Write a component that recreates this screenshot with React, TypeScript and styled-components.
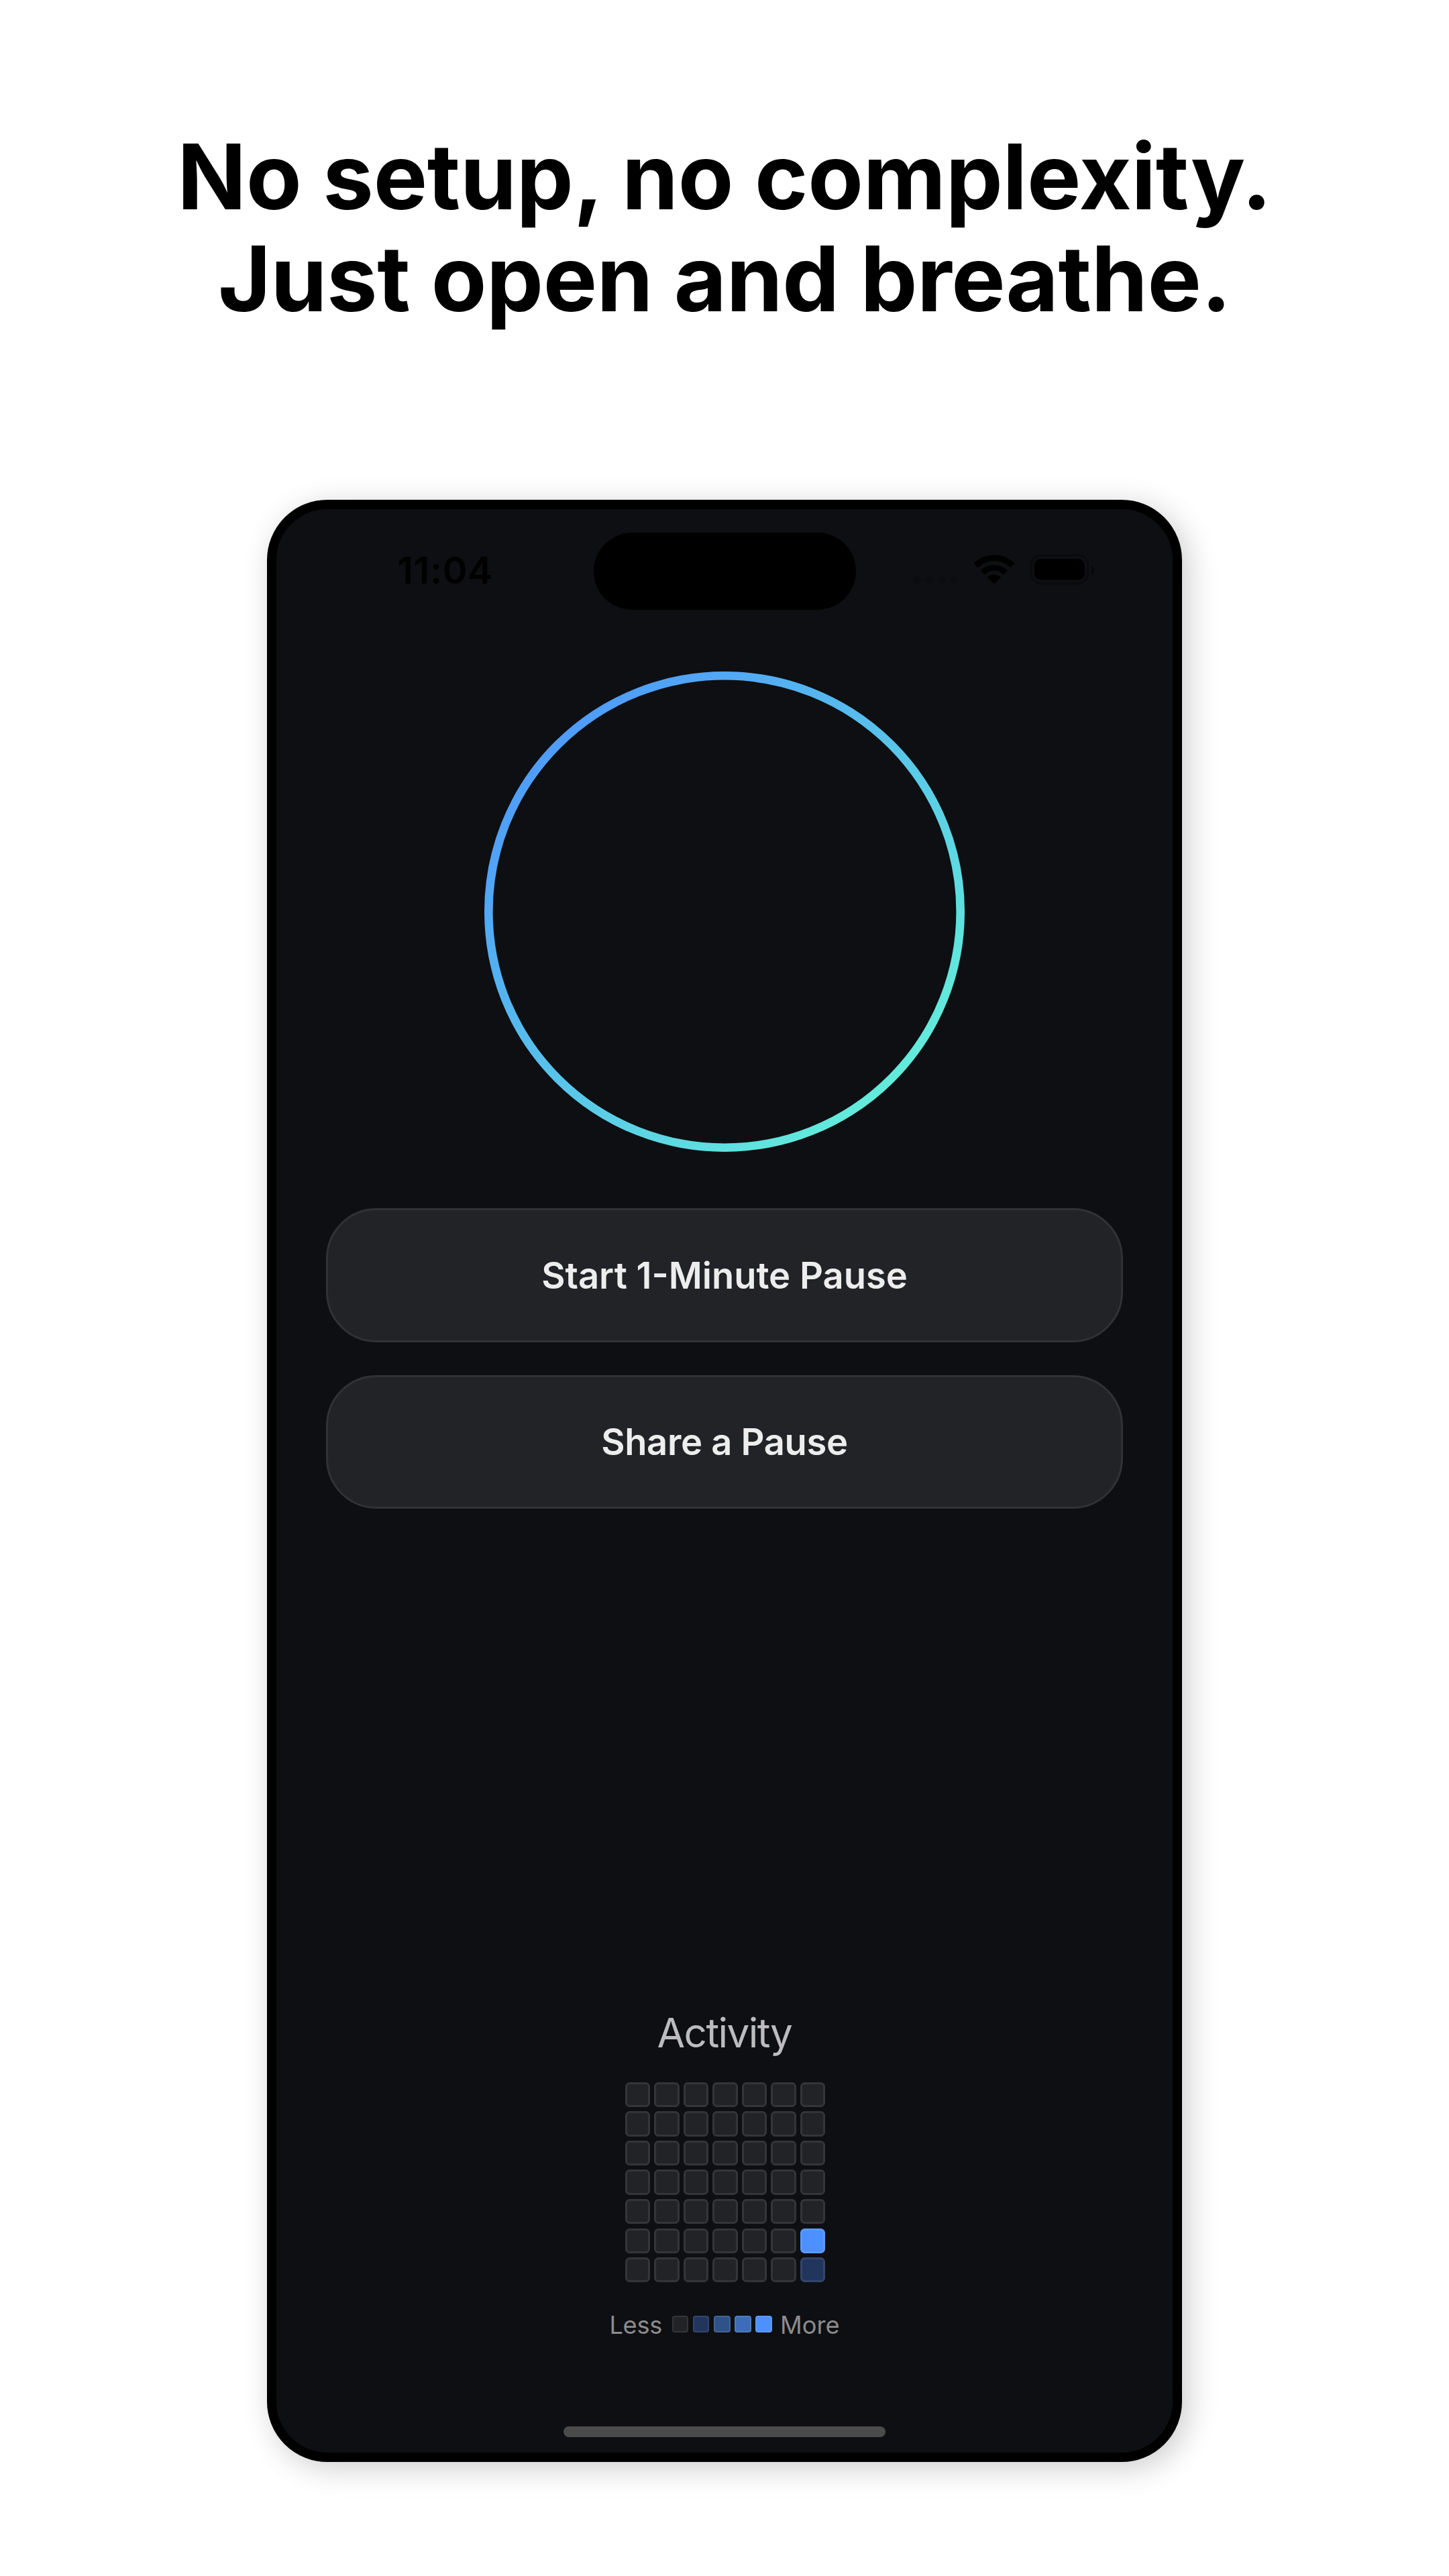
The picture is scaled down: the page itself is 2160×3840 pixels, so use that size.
import React from 'react';
import styled, { createGlobalStyle } from 'styled-components';

const GlobalStyle = createGlobalStyle`
  * {
    box-sizing: border-box;
  }
  body {
    margin: 0;
    background: #ffffff;
    font-family: Inter, 'Liberation Sans', sans-serif;
  }
`;

const Page = styled.main`
  display: flex;
  flex-direction: column;
  align-items: center;
  width: 2160px;
  height: 3840px;
  padding-top: 187px;
  overflow: hidden;
  background: #ffffff;
`;

const Headline = styled.h1`
  margin: 0;
  color: #000000;
  font-size: 135px;
  font-weight: 700;
  line-height: 152px;
  text-align: center;
  white-space: nowrap;
`;

const HeadlineRow = styled.span<{ $tracking: number }>`
  display: block;
  letter-spacing: ${({ $tracking }) => $tracking}px;
`;

const Phone = styled.section`
  width: 1364px;
  height: 2925px;
  margin-top: 254px;
  border: 14px solid #000000;
  border-radius: 90px;
  background: #0e0f12;
  box-shadow: 9px 9px 46px rgba(0, 0, 0, 0.2);
  display: flex;
  flex-direction: column;
  align-items: center;
`;

const StatusBar = styled.header`
  display: flex;
  width: 100%;
  height: 115px;
  margin-top: 35px;
`;

const StatusSide = styled.div<{ $inset: number; $lift: number }>`
  display: flex;
  width: 472.5px;
  align-items: center;
  padding: 0 0 ${({ $lift }) => $lift}px ${({ $inset }) => $inset}px;
`;

const Clock = styled.time`
  color: #000000;
  font-size: 55.5px;
  font-weight: 600;
  line-height: 68px;
  letter-spacing: 0.9px;
`;

const Island = styled.div`
  width: 391px;
  border-radius: 58px;
  background: #000000;
`;

const StatusIcon = styled.svg<{ $gap?: number }>`
  display: block;
  flex: none;
  height: 46px;
  margin-left: ${({ $gap = 0 }) => $gap}px;
  overflow: visible;
`;

const Ring = styled.svg`
  display: block;
  width: 716px;
  height: 716px;
  margin-top: 92px;
`;

const Actions = styled.div`
  display: flex;
  flex-direction: column;
  gap: 49px;
  width: 1188px;
  margin-top: 84px;
`;

const ActionButton = styled.button<{ $tracking?: number }>`
  display: flex;
  align-items: center;
  justify-content: center;
  height: 199.5px;
  padding: 0;
  border: 3px solid #313236;
  border-radius: 75px;
  background: #222327;
  color: #ededee;
  font-family: inherit;
  font-size: 54.3px;
  font-weight: 600;
  line-height: 66px;
  letter-spacing: ${({ $tracking = 0 }) => $tracking}px;
`;

const Activity = styled.section`
  display: flex;
  flex-direction: column;
  align-items: center;
  margin-top: auto;
`;

const ActivityTitle = styled.h2`
  margin: 0 0 36.6px;
  color: #bcbcbe;
  font-size: 60.3px;
  font-weight: 400;
  line-height: 73px;
  letter-spacing: -1.6px;
`;

const levels = [
  { fill: '#222327', edge: '#343537' },
  { fill: '#22355d', edge: '#33456a' },
  { fill: '#2f5389', edge: '#426295' },
  { fill: '#3d6db9', edge: '#4f7bc0' },
  { fill: '#4d90ff', edge: '#5c99ff' },
];

const HeatMap = styled.div`
  display: grid;
  grid-template-columns: repeat(7, 37.31px);
  grid-auto-rows: 37.31px;
  gap: 6.22px;
  margin-left: 2px;
`;

const HeatCell = styled.div<{ $level: number }>`
  border: 3px solid ${({ $level }) => levels[$level].edge};
  border-radius: 6.5px;
  background: ${({ $level }) => levels[$level].fill};
`;

const Legend = styled.div`
  display: flex;
  align-items: center;
  gap: 12.4px;
  margin-top: 41.7px;
  color: #8c8c8e;
  font-size: 36.2px;
  line-height: 44px;
`;

const LegendLess = styled.span`
  margin-right: 2px;
  letter-spacing: -0.25px;
`;

const LegendScale = styled.div`
  display: flex;
  gap: 6.22px;
  margin-bottom: 3px;
`;

const LegendCell = styled.div<{ $level: number }>`
  width: 24.87px;
  height: 24.87px;
  border: 2px solid ${({ $level }) => levels[$level].edge};
  border-radius: 4px;
  background: ${({ $level }) => levels[$level].fill};
`;

const HomeIndicator = styled.div`
  width: 480px;
  height: 16px;
  margin: 129px 0 23px;
  border-radius: 8px;
  background: #4b4b4b;
`;

const days = Array.from({ length: 49 }, (_, i) => (i === 41 ? 4 : i === 48 ? 1 : 0));

function SignalDots() {
  return (
    <StatusIcon width="68" viewBox="0 0 68 46" fill="#000000" fillOpacity="0.18">
      {[6.7, 25.3, 43.7, 62.3].map((cx) => (
        <circle key={cx} cx={cx} cy="38.3" r="6" />
      ))}
    </StatusIcon>
  );
}

function WifiIcon() {
  return (
    <StatusIcon
      $gap={24}
      width="60"
      viewBox="0 0 60 46"
      fill="#000000"
      stroke="#000000"
      strokeWidth="1.6"
      strokeLinejoin="round"
    >
      <path d="M0.6 13.7A42.6 42.6 0 0 1 59.4 13.7L54.3 19A35.2 35.2 0 0 0 5.7 19Z" />
      <path d="M11.2 24.6A27.4 27.4 0 0 1 48.8 24.6L44.2 29.4A20.7 20.7 0 0 0 15.8 29.4Z" />
      <path d="M21 34.8A13.2 13.2 0 0 1 39 34.8L30 43.5Z" />
    </StatusIcon>
  );
}

function BatteryIcon() {
  return (
    <StatusIcon $gap={23} width="97" viewBox="0 0 97 46">
      <rect
        x="2.2"
        y="1.5"
        width="84.6"
        height="42.3"
        rx="14.5"
        fill="none"
        stroke="#000000"
        strokeOpacity="0.32"
        strokeWidth="3"
      />
      <rect x="7" y="7.3" width="74.7" height="31" rx="9" fill="#000000" />
      <path
        d="M91.7 16C95.4 17.3 97 20.4 97 23.4C97 26.4 95.4 29.5 91.7 30.8Z"
        fill="#000000"
        fillOpacity="0.36"
      />
    </StatusIcon>
  );
}

export default function App() {
  return (
    <Page>
      <GlobalStyle />
      <Headline>
        <HeadlineRow $tracking={-0.25}>No setup, no complexity.</HeadlineRow>
        <HeadlineRow $tracking={-0.45}>Just open and breathe.</HeadlineRow>
      </Headline>
      <Phone>
        <StatusBar>
          <StatusSide $inset={180.5} $lift={3}>
            <Clock>11:04</Clock>
          </StatusSide>
          <Island />
          <StatusSide $inset={84} $lift={5}>
            <SignalDots />
            <WifiIcon />
            <BatteryIcon />
          </StatusSide>
        </StatusBar>
        <Ring viewBox="0 0 716 716">
          <defs>
            <linearGradient id="breath" x1="0" y1="0" x2="1" y2="1">
              <stop offset="0" stopColor="#4b8dff" />
              <stop offset="1" stopColor="#66fbd5" />
            </linearGradient>
          </defs>
          <circle cx="358" cy="358" r="351.7" fill="none" stroke="url(#breath)" strokeWidth="12.6" />
        </Ring>
        <Actions>
          <ActionButton>Start 1-Minute Pause</ActionButton>
          <ActionButton $tracking={-0.3}>Share a Pause</ActionButton>
        </Actions>
        <Activity>
          <ActivityTitle>Activity</ActivityTitle>
          <HeatMap>
            {days.map((level, i) => (
              <HeatCell key={i} $level={level} />
            ))}
          </HeatMap>
          <Legend>
            <LegendLess>Less</LegendLess>
            <LegendScale>
              {levels.map((_, level) => (
                <LegendCell key={level} $level={level} />
              ))}
            </LegendScale>
            <span>More</span>
          </Legend>
        </Activity>
        <HomeIndicator />
      </Phone>
    </Page>
  );
}
